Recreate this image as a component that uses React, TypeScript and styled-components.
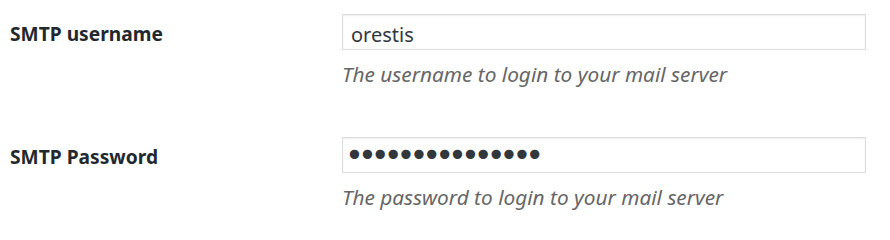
import styled, { createGlobalStyle } from 'styled-components';

const GlobalStyle = createGlobalStyle`
    html, body {
        margin: 0;
        padding: 0;
        background: #fff;
    }
    body {
        font-family: 'Noto Sans', 'Open Sans', sans-serif;
        color: #23282d;
    }
`;

const fields = [
    {
        id: 'smtp_username',
        label: 'SMTP username',
        type: 'text',
        value: 'orestis',
        help: 'The username to login to your mail server',
    },
    {
        id: 'smtp_password',
        label: 'SMTP Password',
        type: 'password',
        value: 'secretpassword1',
        help: 'The password to login to your mail server',
    },
];

function App() {
    return (
        <>
            <GlobalStyle />
            <Form>
                {fields.map((field) => (
                    <Row key={field.id}>
                        <Label htmlFor={field.id}>{field.label}</Label>
                        <Field>
                            <Input
                                id={field.id}
                                type={field.type}
                                defaultValue={field.value}
                                masked={field.type === 'password'}
                            />
                            <Help>{field.help}</Help>
                        </Field>
                    </Row>
                ))}
            </Form>
        </>
    );
}

export default App;

const Form = styled.form`
    display: flex;
    flex-direction: column;
    gap: 49px;
    padding: 14px 24px 0 10px;
`;

const Row = styled.div`
    display: grid;
    grid-template-columns: 332px 524px;
    align-items: start;
`;

const Label = styled.label`
    padding-top: 2px;
    font-size: 19.2px;
    font-weight: 700;
    line-height: 36px;
    color: #23282d;
`;

const Field = styled.div`
    display: flex;
    flex-direction: column;
`;

const Input = styled.input.withConfig({
    shouldForwardProp: (prop) => prop !== 'masked',
})<{ masked: boolean }>`
    box-sizing: border-box;
    width: 524px;
    height: 36px;
    margin: 0;
    padding: ${(props) => (props.masked ? '0 8px 0 2px' : '4px 8px 0')};
    border: 1px solid #ddd;
    border-radius: 0;
    box-shadow: inset 0 1px 2px rgba(0, 0, 0, 0.07);
    background: #fff;
    font-family: ${(props) =>
        props.masked ? "'DejaVu Sans', sans-serif" : "'Noto Sans', 'Open Sans', sans-serif"};
    font-size: ${(props) => (props.masked ? '32px' : '20px')};
    letter-spacing: ${(props) => (props.masked ? '-6px' : '0')};
    color: #32373c;
    outline: none;
`;

const Help = styled.p`
    margin: 10px 0 0;
    font-size: 20.8px;
    font-style: italic;
    line-height: 28px;
    color: #666;
`;
